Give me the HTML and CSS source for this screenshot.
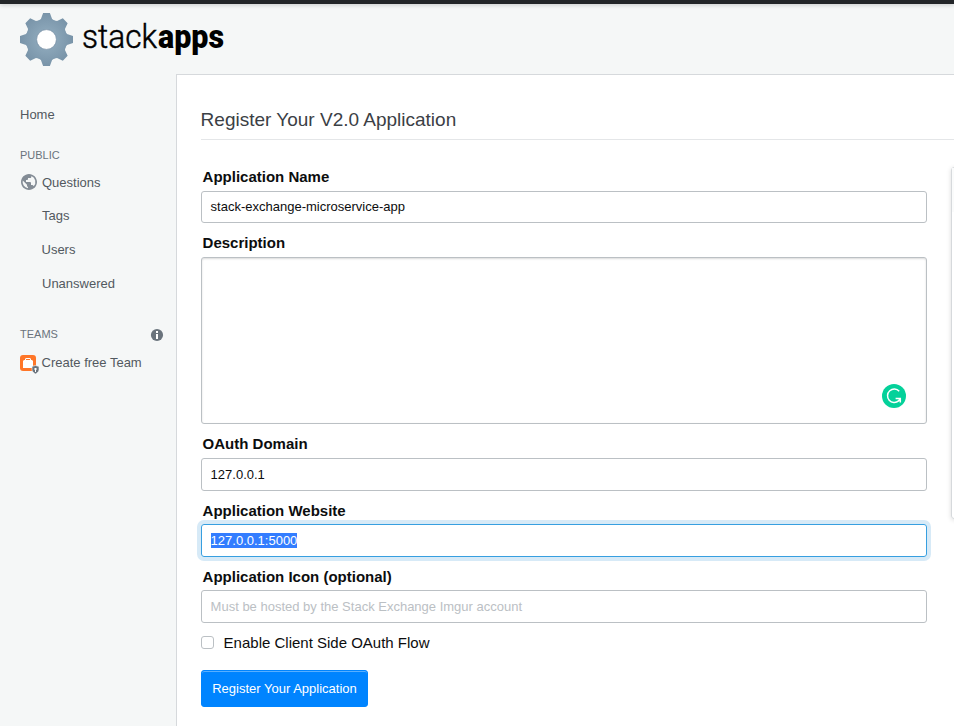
FILE: index.html
```html
<!DOCTYPE html>
<html lang="en">
<head>
<meta charset="utf-8">
<title>Register Your V2.0 Application - Stack Apps</title>
<link rel="stylesheet" href="styles.css">
</head>
<body>
<div class="topbar"></div>
<header class="site-header">
  <svg class="gear" width="54" height="54" viewBox="-27 -27 54 54">
    <defs>
      <radialGradient id="steel" gradientUnits="userSpaceOnUse" cx="0" cy="0" r="27">
        <stop offset="0.35" stop-color="#8ba6b9"/><stop offset="1" stop-color="#7893a8"/>
      </radialGradient>
      <path id="tooth" d="M-8-17L-7.8-19L-5.6-20.5L-3.4-26.5H3.4L5.6-20.5L7.8-19L8-17Z"/>
    </defs>
    <g fill="url(#steel)">
      <circle r="20.6"/>
      <use href="#tooth"/><use href="#tooth" transform="rotate(45)"/><use href="#tooth" transform="rotate(90)"/><use href="#tooth" transform="rotate(135)"/>
      <use href="#tooth" transform="rotate(180)"/><use href="#tooth" transform="rotate(225)"/><use href="#tooth" transform="rotate(270)"/><use href="#tooth" transform="rotate(315)"/>
    </g>
    <circle r="9.9" fill="#fff" stroke="#7189a0" stroke-width=".7"/>
  </svg>
  <svg class="wordmark" width="150" height="50" viewBox="0 0 150 50">
    <text class="word-light" x="1" y="37" textLength="75" lengthAdjust="spacingAndGlyphs">stack</text>
    <text class="word-bold" x="77" y="37" textLength="66" lengthAdjust="spacingAndGlyphs">apps</text>
  </svg>
</header>
<div class="layout">
  <nav class="sidebar">
    <a class="item home">Home</a>
    <div class="heading public">PUBLIC</div>
    <a class="item questions">
      <svg class="globe" width="18" height="18" viewBox="0 0 18 18"><path fill="#838c95" d="M9 1C4.64 1 1 4.64 1 9c0 4.36 3.64 8 8 8 4.36 0 8-3.64 8-8 0-4.36-3.64-8-8-8ZM8 15.32a6.46 6.46 0 0 1-4.3-2.74 6.46 6.46 0 0 1-.93-5.01L7 11.68v.8c0 .88.12 1.32 1 1.32v1.52Zm5.72-2c-.2-.66-1-1.32-1.72-1.32h-1v-2c0-.44-.56-1-1-1H6V7h1c.44 0 1-.56 1-1V5h2c.88 0 1.4-.72 1.4-1.6v-.33a6.45 6.45 0 0 1 3.83 4.51 6.45 6.45 0 0 1-1.51 5.73v.01Z"/></svg>Questions</a>
    <a class="item sub">Tags</a>
    <a class="item sub users">Users</a>
    <a class="item sub">Unanswered</a>
    <div class="heading teams">TEAMS
      <svg width="14" height="14" viewBox="0 0 14 14"><circle cx="7" cy="7" r="6.1" fill="#6a737c"/><path fill="#fff" d="M6 3h2v2H6zM6 6h2v5H6z"/></svg>
    </div>
    <a class="item create">
      <svg width="20" height="20" viewBox="0 0 20 20"><rect x="0" y="0" width="16" height="16" rx="3" fill="#ff7628"/><path fill="#fff" d="M5 5V4l1-1h4l1 1v1h1l1 1v7H3V6l1-1z"/><path stroke="#ff7628" d="M6 4.5h4"/><path fill="#6a737c" stroke="#f5f7f7" stroke-width=".6" d="M12 11.4l3.5-.9 3.5.9v3.2c0 2-1.5 3.3-3.5 4.3-2-1-3.5-2.3-3.5-4.3z"/><path fill="#fff" d="M14.5 13h2v2h-.5v2h-1v-2h-.5z"/></svg>Create free Team</a>
  </nav>
  <main class="content">
    <h1>Register Your V2.0 Application</h1>
    <div class="columns">
      <form class="form">
        <label>Application Name</label>
        <div class="field name">stack-exchange-microservice-app</div>
        <label>Description</label>
        <div class="field area">
          <svg class="grammar" width="24" height="24" viewBox="0 0 24 24"><circle cx="12" cy="12" r="12" fill="#04d19a"/><path d="M17.2 7.3A6.7 6.7 0 1 0 16.6 16.9L18 14.8M13.6 14.6h4.7v4" fill="none" stroke="#fff" stroke-width="1.5"/></svg>
        </div>
        <label>OAuth Domain</label>
        <div class="field">127.0.0.1</div>
        <label>Application Website</label>
        <div class="field focused"><span>127.0.0.1:5000</span></div>
        <label>Application Icon (optional)</label>
        <div class="field placeholder">Must be hosted by the Stack Exchange Imgur account</div>
        <div class="check"><i></i>Enable Client Side OAuth Flow</div>
        <button type="button">Register Your Application</button>
      </form>
      <aside class="panel"><div class="panel-head"></div></aside>
    </div>
  </main>
</div>
</body>
</html>
```
FILE: styles.css
```css
* { box-sizing: border-box; }
body { margin: 0; height: 726px; overflow: hidden; background: #f5f7f7; font-family: "Liberation Sans", Arial, sans-serif; font-size: 13px; color: #0c0d0e; }
.topbar { height: 4px; background: #232629; box-shadow: 0 1px 4px rgba(12,13,14,.2); position: relative; }
.site-header { height: 70px; padding: 8px 0 0 20px; display: flex; }
.gear { transform: translate(-.5px, .5px); }
.wordmark { margin: -1px 0 0 7px; font-family: Roboto, sans-serif; font-size: 34px; }
.word-light { font-weight: 300; stroke: #000; stroke-width: .5px; }
.word-bold { font-weight: 900; }
.layout { display: flex; height: 652px; }
.sidebar { width: 176px; flex: none; padding-top: 30px; color: #525960; }
.item { display: flex; align-items: center; height: 20px; padding-left: 20px; }
.heading { font-size: 11px; line-height: 14px; color: #6a737c; padding-left: 20px; }
.public { margin: 24px 0 10px; }
.questions { margin-bottom: 13px; }
.globe { margin-right: 4px; }
.sub { padding-left: 42px; margin-bottom: 14px; }
.users { padding-left: 41.5px; }
.teams { display: flex; justify-content: space-between; align-items: flex-start; height: 14px; padding-right: 12px; margin: 34px 0 12px; }
.teams svg { margin-top: 1px; }
.create { align-items: flex-start; line-height: 20px; }
.create svg { margin: 2px 1.5px 0 0; }
.content { width: 778px; flex: none; border: solid #d6d9dc; border-width: 1px 0 0 1px; background: #fff; padding-left: 24px; }
h1 { margin: 0; height: 65px; padding-top: 33px; border-bottom: 1px solid #e4e6e8; font-size: 19px; line-height: 24px; font-weight: 400; color: #3b4045; text-indent: -.4px; }
.columns { display: flex; }
.form { width: 726px; padding-top: 27px; flex: none; }
label { display: block; height: 24px; padding: .4px 0 0 1.6px; font-size: 15px; font-weight: 700; line-height: 20px; }
.field { height: 33px; border: 1px solid #bbc0c4; border-radius: 3px; padding: 0 8.6px; line-height: 31px; margin-bottom: 9.2px; }
.name { height: 32px; line-height: 30px; margin-bottom: 10px; }
.area { height: 167px; margin-bottom: 10px; display: flex; align-items: flex-end; justify-content: flex-end; padding: 0 20px 15px; box-shadow: inset 0 1px 2px rgba(12,13,14,.15); }
.focused { border-color: #379fe0; box-shadow: 0 0 0 4px #d7eaf7; }
.focused span { display: inline-block; line-height: 15px; background: #337dff; color: #fff; }
.placeholder { color: #bbc0c4; }
.check { display: flex; align-items: center; height: 20px; font-size: 15px; }
.check i { width: 13px; height: 13px; border: 1px solid #bbc0c4; border-radius: 3px; margin-right: 9.6px; }
button { display: block; width: 167px; height: 37px; margin-top: 17px; padding: 0; border: 1px solid #0084ff; border-radius: 3px; background: #0084ff; box-shadow: inset 0 1px 0 rgba(255,255,255,.35); color: #fff; font: 13px "Liberation Sans", sans-serif; }
.panel { width: 30px; height: 352px; flex: none; margin: 27px 0 0 24px; border: 1px solid #d6d9dc; border-radius: 3px; box-shadow: 0 1px 5px rgba(12,13,14,.14); }
.panel-head { height: 44px; background: #fafbfb; }
```
